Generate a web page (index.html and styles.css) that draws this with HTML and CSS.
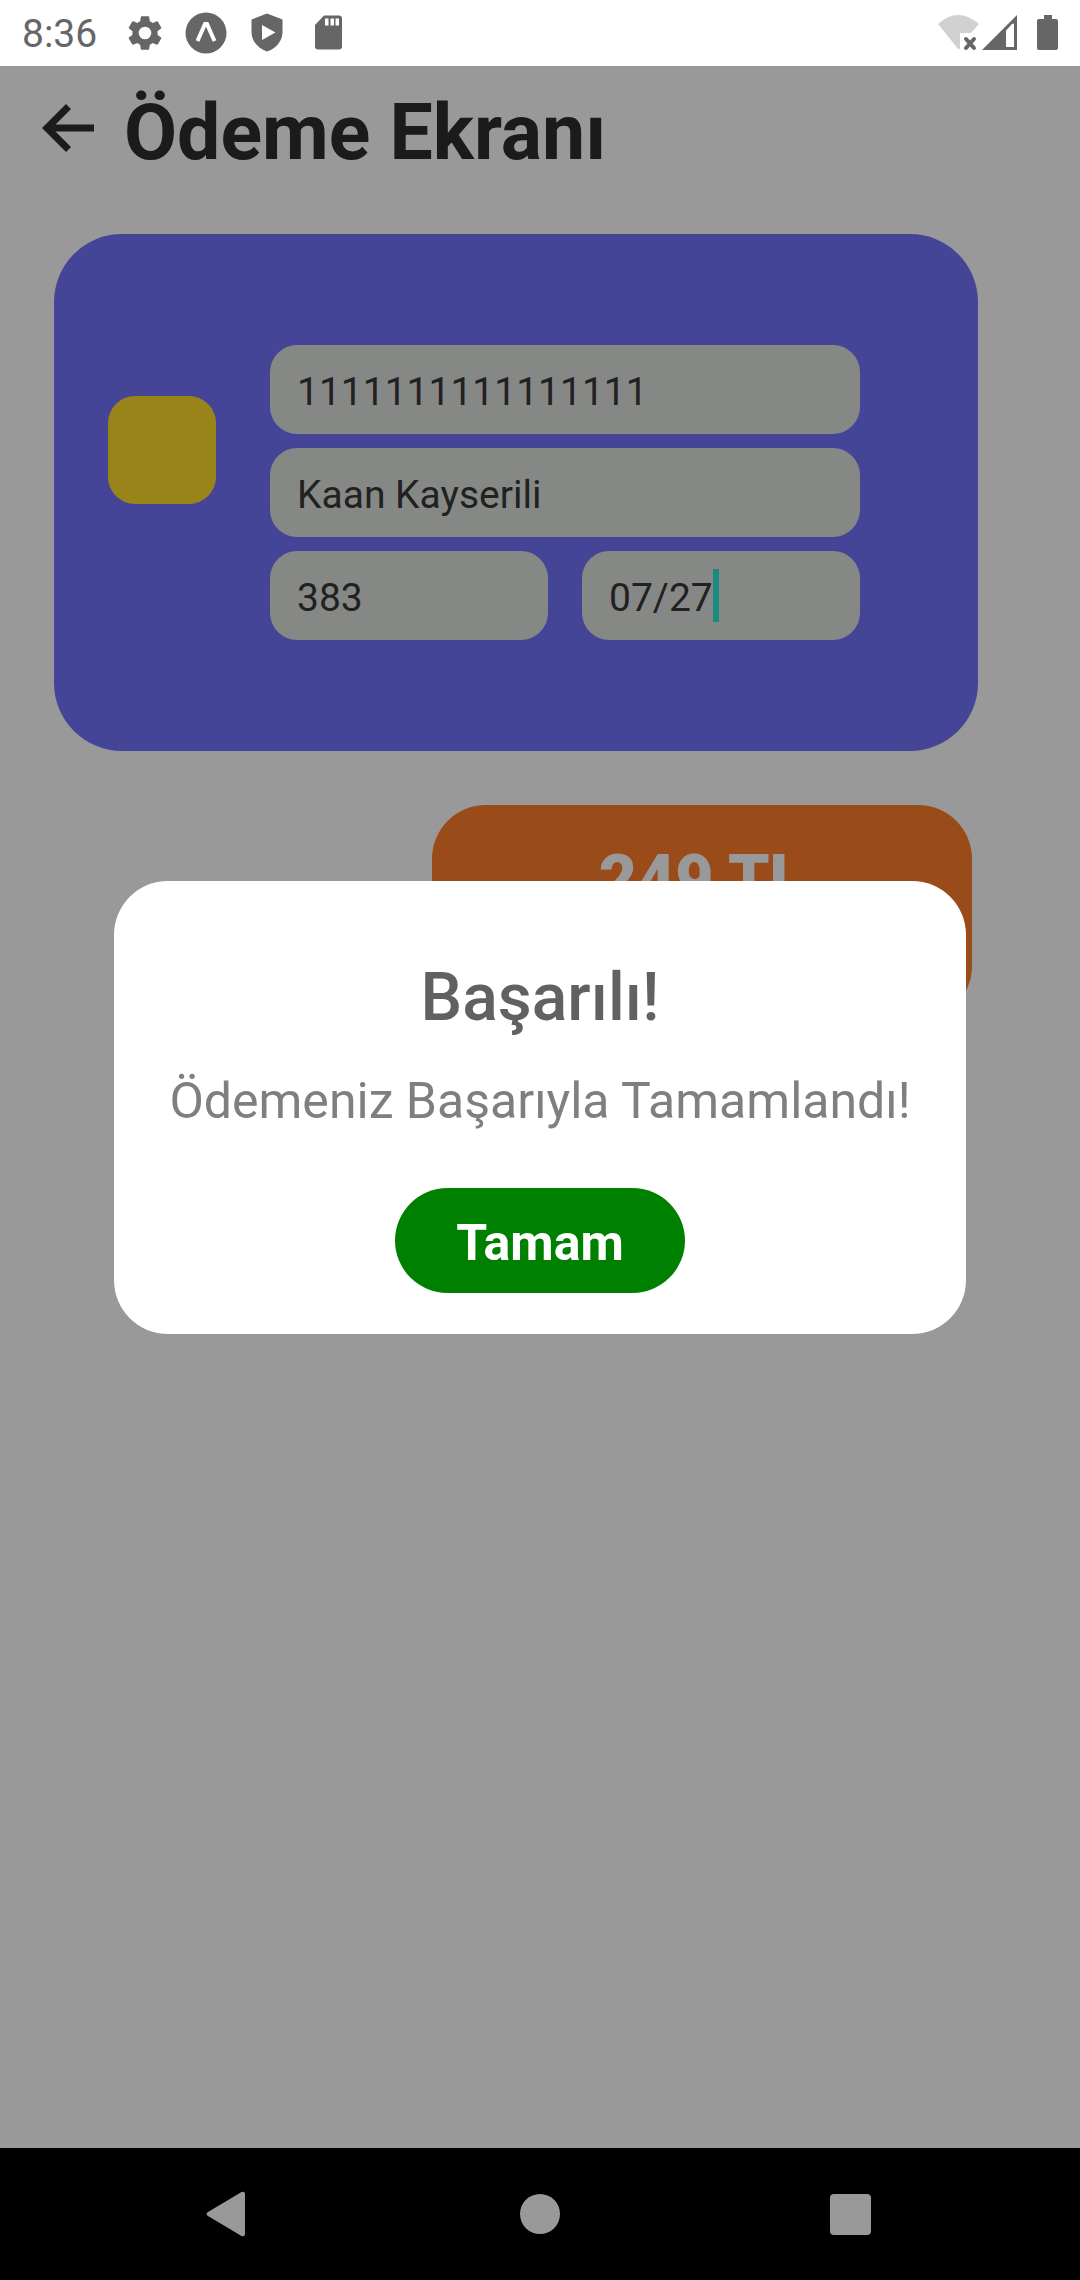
FILE: index.html
```
<!DOCTYPE html>
<html lang="tr">
<head>
  <meta charset="utf-8">
  <meta name="viewport" content="width=device-width, initial-scale=1">
  <title>Ödeme Ekranı</title>
  <link rel="stylesheet" href="styles.css">
</head>
<body>
  <div class="status-bar">
    <div class="status-group status-left">
      <time class="clock">8:36</time>
      <svg class="icon" width="42" height="42" viewBox="0 0 24 24" aria-hidden="true"><path d="M19.14 12.94c.04-.3.06-.61.06-.94 0-.32-.02-.64-.07-.94l2.03-1.58a.49.49 0 0 0 .12-.61l-1.92-3.32a.49.49 0 0 0-.59-.22l-2.39.96c-.5-.38-1.03-.7-1.62-.94l-.36-2.54a.48.48 0 0 0-.48-.41h-3.84c-.24 0-.43.17-.47.41l-.36 2.54c-.59.24-1.13.57-1.62.94l-2.39-.96c-.22-.08-.47 0-.59.22L2.740 8.87c-.12.21-.08.47.12.61l2.03 1.580c-.05.3-.09.63-.09.94s.02.64.07.94l-2.03 1.580a.49.49 0 0 0-.12.61l1.920 3.320c.12.22.37.29.59.22l2.390-.96c.5.38 1.030.7 1.620.94l.36 2.540c.05.24.24.41.48.41h3.840c.24 0 .44-.17.47-.41l.36-2.540c.59-.24 1.130-.56 1.620-.94l2.390.96c.22.08.47 0 .59-.22l1.920-3.320c.12-.22.07-.47-.12-.61l-2.010-1.580zM12 15.600a3.600 3.600 0 1 1 0-7.200 3.600 3.600 0 0 1 0 7.200z"/></svg>
      <svg class="icon" width="42" height="42" viewBox="0 0 42 42" aria-hidden="true"><circle cx="21" cy="21" r="20.5"/><path d="M12.5 29 20 12h2l7.500 17" fill="none" stroke="#fff" stroke-width="4"/></svg>
      <svg class="icon" width="42" height="42" viewBox="0 0 42 42" aria-hidden="true"><path d="M21 1.500 36.500 7.500V20c0 9-6.500 16.500-15.500 19.500C12 36.500 5.500 29 5.500 20V7.500z"/><path d="M16 13v15l13.500-7.500z" fill="#fff"/></svg>
      <svg class="icon" width="42" height="42" viewBox="0 0 42 42" aria-hidden="true"><path d="M17 3.500h15a3 3 0 0 1 3 3v28a3 3 0 0 1-3 3H11a3 3 0 0 1-3-3V13z"/><path d="M18 6.500h3.500v7H18zm5.500 0H27v7h-3.500zm5 0H32v7h-3.500z" fill="#fff"/></svg>
    </div>
    <div class="status-group status-right">
      <svg class="icon" width="42" height="42" viewBox="0 0 42 42" aria-hidden="true"><path d="M0 12Q20-6 41 12l-8 9H22v15l-1.500 1.500z" fill="#d1d1d1"/><path d="m28 27 8 9m0-9-8 9" stroke="#666" stroke-width="4" stroke-linecap="round"/></svg>
      <svg class="icon" width="36" height="42" viewBox="0 0 36 42" aria-hidden="true"><path fill-rule="evenodd" d="M0 38 35 3v35zm24-3h8V11.500l-2 .5-6 6.500z"/></svg>
      <svg class="icon battery" width="22" height="42" viewBox="0 0 22 42" aria-hidden="true"><path d="M7 3h8v4h4a2 2 0 0 1 2 2v27a2 2 0 0 1-2 2H2a2 2 0 0 1-2-2V9a2 2 0 0 1 2-2h5z"/></svg>
    </div>
  </div>

  <div class="screen">
    <header class="header">
      <button class="back" type="button" aria-label="Geri">
        <svg width="52" height="48" viewBox="0 0 52 48" aria-hidden="true"><path d="M0 24 24 0l5 5-15.500 15.500H52v7H13.500L29 43l-5 5z" fill="#2d2d2d"/></svg>
      </button>
      <h1 class="title">Ödeme Ekranı</h1>
    </header>

    <main>
      <form class="card">
        <div class="chip"></div>
        <div class="fields">
          <div class="field field-wide"><input class="field-input" type="text" inputmode="numeric" aria-label="Kart numarası" value="1111111111111111"></div>
          <div class="field field-wide"><input class="field-input" type="text" aria-label="Kart sahibi" value="Kaan Kayserili"></div>
          <div class="field"><input class="field-input" type="text" inputmode="numeric" aria-label="CVV" value="383"></div>
          <div class="field"><input class="field-input field-input-active" type="text" aria-label="Son kullanma tarihi" value="07/27"><span class="caret"></span></div>
        </div>
      </form>
      <button class="pay" type="button">249 TL</button>
    </main>

    <div class="overlay">
      <dialog class="dialog" open aria-labelledby="dialog-title">
        <h2 class="dialog-title" id="dialog-title">Başarılı!</h2>
        <p class="dialog-text">Ödemeniz Başarıyla Tamamlandı!</p>
        <button class="dialog-button" type="button">Tamam</button>
      </dialog>
    </div>
  </div>

  <nav class="nav-bar" aria-label="Sistem">
    <button class="nav-button" type="button" aria-label="Geri"><svg width="48" height="48" viewBox="0 0 48 48" aria-hidden="true"><path d="M2 22 35.500 2q3.500-1 3.500 2v40q0 3-3.500 2L2 26q-3-2 0-4z"/></svg></button>
    <button class="nav-button" type="button" aria-label="Ana ekran"><svg width="48" height="48" viewBox="0 0 48 48" aria-hidden="true"><circle cx="24" cy="24" r="20"/></svg></button>
    <button class="nav-button" type="button" aria-label="Son uygulamalar"><svg width="48" height="48" viewBox="0 0 48 48" aria-hidden="true"><rect x="4" y="4" width="41" height="41" rx="4"/></svg></button>
  </nav>
</body>
</html>
```

FILE: styles.css
```
* {
  box-sizing: border-box;
}

body {
  margin: 0;
  min-height: 100vh;
  display: flex;
  flex-direction: column;
  background: #fff;
  font-family: Roboto, "Noto Sans", sans-serif;
}

button,
input {
  font: inherit;
  border: 0;
  padding: 0;
  margin: 0;
  background: none;
}

svg {
  display: block;
}

/* System status bar */
.status-bar {
  display: flex;
  justify-content: space-between;
  align-items: center;
  height: 66px;
  padding: 0 21px 0 22px;
  color: #666;
}

.status-group {
  display: flex;
  align-items: center;
}

.status-left {
  gap: 19px;
}

.clock {
  margin-right: 8px;
  padding-top: 2px;
  font-size: 39px;
  line-height: 46px;
}

.icon {
  fill: #666;
}

.status-right {
  gap: 2px;
}

.battery {
  margin-left: 17px;
}

/* App screen */
.screen {
  position: relative;
  flex: 1;
}

.header {
  display: flex;
  align-items: center;
  gap: 30px;
  padding: 22px 42px 56px;
}

.back {
  padding-bottom: 10px;
}

.title {
  margin: 0;
  font-size: 77px;
  line-height: 90px;
  font-weight: 700;
  color: #2d2d2d;
}

.card {
  display: flex;
  align-items: center;
  gap: 54px;
  margin: 0 102px 54px 54px;
  padding: 111px 118px 111px 54px;
  border-radius: 68px;
  background: #7373fd;
}

.chip {
  flex: none;
  width: 108px;
  height: 108px;
  margin-bottom: 86px;
  border-radius: 27px;
  background: #ffdc2b;
}

.fields {
  flex: 1;
  display: grid;
  grid-template-columns: 1fr 1fr;
  gap: 14px 34px;
}

.field {
  display: flex;
  align-items: center;
  min-width: 0;
  height: 89px;
  padding: 0 27px;
  border-radius: 27px;
  background: #e0e3e0;
}

.field-wide {
  grid-column: 1 / -1;
}

.field-input {
  width: 100%;
  padding-top: 4px;
  font-size: 39px;
  line-height: 46px;
  color: #383838;
  outline: 0;
}

.field-input-active {
  width: auto;
  field-sizing: content;
}

.caret {
  width: 6px;
  height: 53px;
  background: #2de8d9;
}

.pay {
  display: block;
  width: 50%;
  margin-left: 40%;
  padding: 36px 54px 102px;
  border-radius: 54px;
  background: #ff7d2b;
  font-size: 66px;
  line-height: 77px;
  font-weight: 900;
  color: #fff;
}

/* Result dialog */
.overlay {
  position: absolute;
  inset: 0;
  display: grid;
  place-items: center;
  background: rgba(0, 0, 0, 0.4);
}

.dialog {
  position: static;
  display: flex;
  flex-direction: column;
  align-items: center;
  margin: 0;
  padding: 78px 55px 41px;
  border: 0;
  border-radius: 54px;
  background: #fff;
}

.dialog-title {
  margin: 0 0 36px;
  font-size: 66px;
  line-height: 77px;
  font-weight: 500;
  color: #616161;
}

.dialog-text {
  margin: 0 0 57px;
  font-size: 50px;
  line-height: 59px;
  color: #7f7f7f;
}

.dialog-button {
  padding: 26px 61px 20px;
  border-radius: 54px;
  background: #008000;
  font-size: 50px;
  line-height: 59px;
  font-weight: 700;
  color: #fff;
}

/* System navigation */
.nav-bar {
  display: flex;
  justify-content: center;
  align-items: center;
  gap: 262px;
  height: 132px;
  background: #000;
}

.nav-button {
  fill: #999;
}
```
